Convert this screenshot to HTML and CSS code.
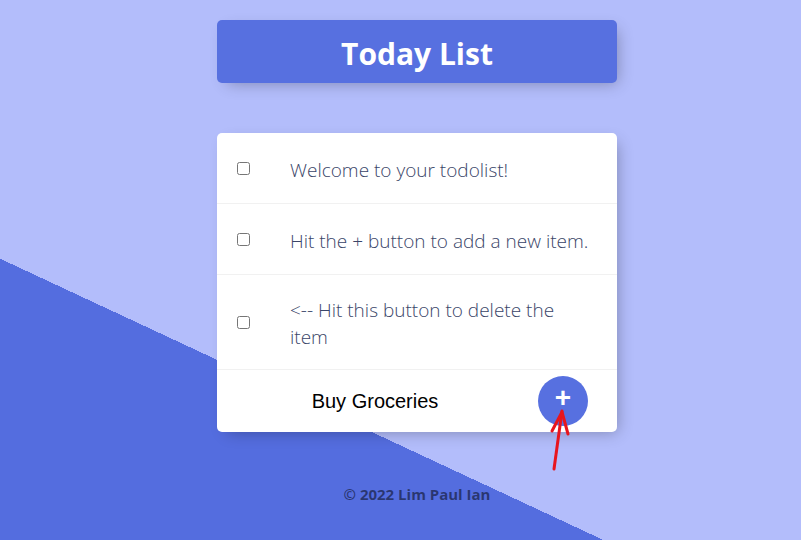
FILE: index.html
```html
<!DOCTYPE html>
<html lang="en">
<head>
<meta charset="utf-8">
<title>Today List</title>
<link rel="stylesheet" href="styles.css">
</head>
<body>
  <div class="page">
    <div class="box heading">
      <h1>Today List</h1>
    </div>
    <div class="box list">
      <div class="item">
        <input type="checkbox">
        <p>Welcome to your todolist!</p>
      </div>
      <div class="item">
        <input type="checkbox">
        <p>Hit the + button to add a new item.</p>
      </div>
      <div class="item">
        <input type="checkbox">
        <p>&lt;-- Hit this button to delete the item</p>
      </div>
      <form class="add-form">
        <input type="text" class="new-item" value="Buy Groceries">
        <button type="button" class="add-btn">+</button>
      </form>
    </div>
    <footer class="footer">© 2022 Lim Paul Ian</footer>
  </div>
  <svg class="annotation" width="40" height="80" viewBox="0 0 40 80">
    <g fill="none" stroke="#e8151d" stroke-width="3" stroke-linecap="round" stroke-linejoin="round">
      <path d="M14 68 L22 10"/>
      <path d="M12 30 L22 11 L28 33"/>
    </g>
  </svg>
</body>
</html>
```
FILE: styles.css
```css
html {
  height: 100%;
}

body {
  margin: 0;
  height: 100%;
  overflow: hidden;
  background-color: #b3bdfb;
  background-image: linear-gradient(25deg, #546ddf 255px, #b3bdfb 255px);
  font-family: "Open Sans", "Noto Sans", sans-serif;
  position: relative;
}

.page {
  padding: 20px 0 0 33px;
}

.box {
  width: 400px;
  margin: 0 auto;
  border-radius: 5px;
  box-shadow: 5px 5px 15px -5px rgba(0, 0, 0, 0.3);
}

.heading {
  background-color: #5770e0;
  text-align: center;
  margin-bottom: 50px;
}

.heading h1 {
  margin: 0;
  padding: 12px 10px 8px;
  height: 43px;
  line-height: 43px;
  color: #fff;
  font-size: 30px;
  font-weight: 700;
}

.list {
  background: #fff;
}

.item {
  min-height: 70px;
  display: flex;
  align-items: center;
  border-bottom: 1px solid #f1f1f1;
}

.item input[type="checkbox"] {
  margin: 20px;
  width: 13px;
  height: 13px;
  flex: none;
}

.item p {
  flex: 1;
  margin: 0;
  padding: 22px 24px 18px 20px;
  font-size: 19px;
  line-height: 27px;
  font-weight: 300;
  color: #3a4568;
}

.add-form {
  display: flex;
  align-items: center;
  padding-left: 20px;
}

.new-item {
  width: 256px;
  height: 60px;
  box-sizing: content-box;
  padding: 1px 2px 1px 10px;
  border: none;
  outline: none;
  text-align: center;
  font-family: "Liberation Sans", Arial, sans-serif;
  font-size: 20px;
  color: #000;
  background: transparent;
}

.add-btn {
  margin-left: 33px;
  width: 50px;
  height: 50px;
  border-radius: 50%;
  border: 0;
  padding: 0 0 6px;
  display: flex;
  align-items: center;
  justify-content: center;
  background-color: #5770e0;
  color: #fff;
  font-family: "Liberation Sans", Arial, sans-serif;
  font-size: 28px;
  font-weight: 700;
  line-height: 1;
}

.footer {
  margin-top: 52px;
  text-align: center;
  font-size: 15px;
  font-weight: 700;
  color: rgba(0, 0, 0, 0.5);
}

.annotation {
  position: absolute;
  left: 540px;
  top: 401px;
  pointer-events: none;
}
```
